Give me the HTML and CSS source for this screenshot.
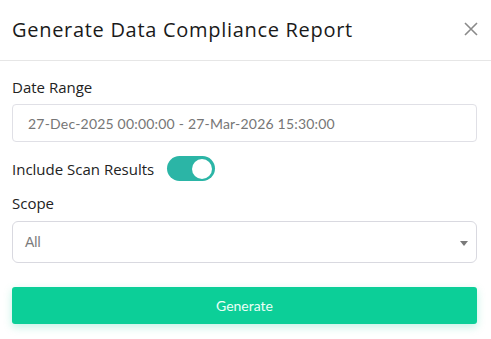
FILE: index.html
```
<!DOCTYPE html>
<html>
<head>
<meta charset="utf-8">
<link rel="stylesheet" href="styles.css">
</head>
<body>
<div class="dialog">
  <div class="header">
    <div class="title">Generate Data Compliance Report</div>
    <svg class="close" width="14" height="14" viewBox="0 0 14 14"><path d="M1 1L13 13M13 1L1 13" stroke="#8a8a8a" stroke-width="1.6" fill="none"/></svg>
  </div>
  <div class="body">
    <div class="label lbl-date">Date Range</div>
    <div class="input"><span class="input-text">27-Dec-2025 00:00:00 - 27-Mar-2026 15:30:00</span></div>
    <div class="toggle-row">
      <div class="label">Include Scan Results</div>
      <div class="switch"><div class="knob"></div></div>
    </div>
    <div class="label lbl-scope">Scope</div>
    <div class="select"><span class="select-text">All</span><span class="caret"></span></div>
    <div class="btn">Generate</div>
  </div>
</div>
</body>
</html>
```
FILE: styles.css
```
* { box-sizing: border-box; }
html, body { margin: 0; padding: 0; background: #fff; }
body { width: 491px; height: 339px; overflow: hidden; }
.dialog { width: 491px; }
.header {
  height: 61px;
  border-bottom: 1px solid #e6e6e6;
  display: flex;
  align-items: center;
  justify-content: space-between;
  padding: 0 13px 2px 12px;
}
.title {
  font-family: "Open Sans", sans-serif;
  font-size: 20px;
  color: #1a1a1a;
  letter-spacing: 0.7px;
}
.close { display: block; }
.body { padding: 16px 14px 0 12px; display: flex; flex-direction: column; }
.label {
  font-family: "Open Sans", sans-serif;
  font-size: 15px;
  color: #222;
  line-height: 20px;
}
.input {
  margin-top: 7px;
  height: 38px;
  border: 1px solid #e0e0e6;
  border-radius: 4px;
  display: flex;
  align-items: center;
  padding-left: 15px;
}
.input-text {
  font-family: "Lato", sans-serif;
  font-size: 14px;
  color: #767676;
  letter-spacing: 0.2px;
}
.toggle-row { display: flex; align-items: center; margin-top: 14px; gap: 13px; }
.switch {
  width: 48px; height: 25px;
  border-radius: 13px;
  background: #2bb5a6;
  position: relative;
}
.knob {
  position: absolute;
  right: 3px; top: 2.5px;
  width: 20px; height: 20px;
  border-radius: 50%;
  background: #fff;
}
.lbl-scope { margin-top: 12px; }
.select {
  margin-top: 8px;
  height: 42px;
  border: 1px solid #d9d9e0;
  border-radius: 6px;
  display: flex;
  align-items: center;
  justify-content: space-between;
  padding: 0 8px 0 12px;
}
.select-text {
  font-family: "Liberation Sans", sans-serif;
  font-size: 14px;
  color: #7a7a7a;
}
.caret {
  width: 0; height: 0;
  border-left: 4px solid transparent;
  border-right: 4px solid transparent;
  border-top: 5px solid #7a7a7a;
  margin-top: 2px;
}
.btn {
  margin-top: 24px;
  height: 37px;
  background: #0ccf98;
  border-radius: 3px;
  box-shadow: 0 3px 8px rgba(12, 207, 152, 0.25);
  display: flex;
  align-items: center;
  justify-content: center;
  font-family: "Lato", sans-serif;
  font-size: 14px;
  color: #eafff7;
}
```
